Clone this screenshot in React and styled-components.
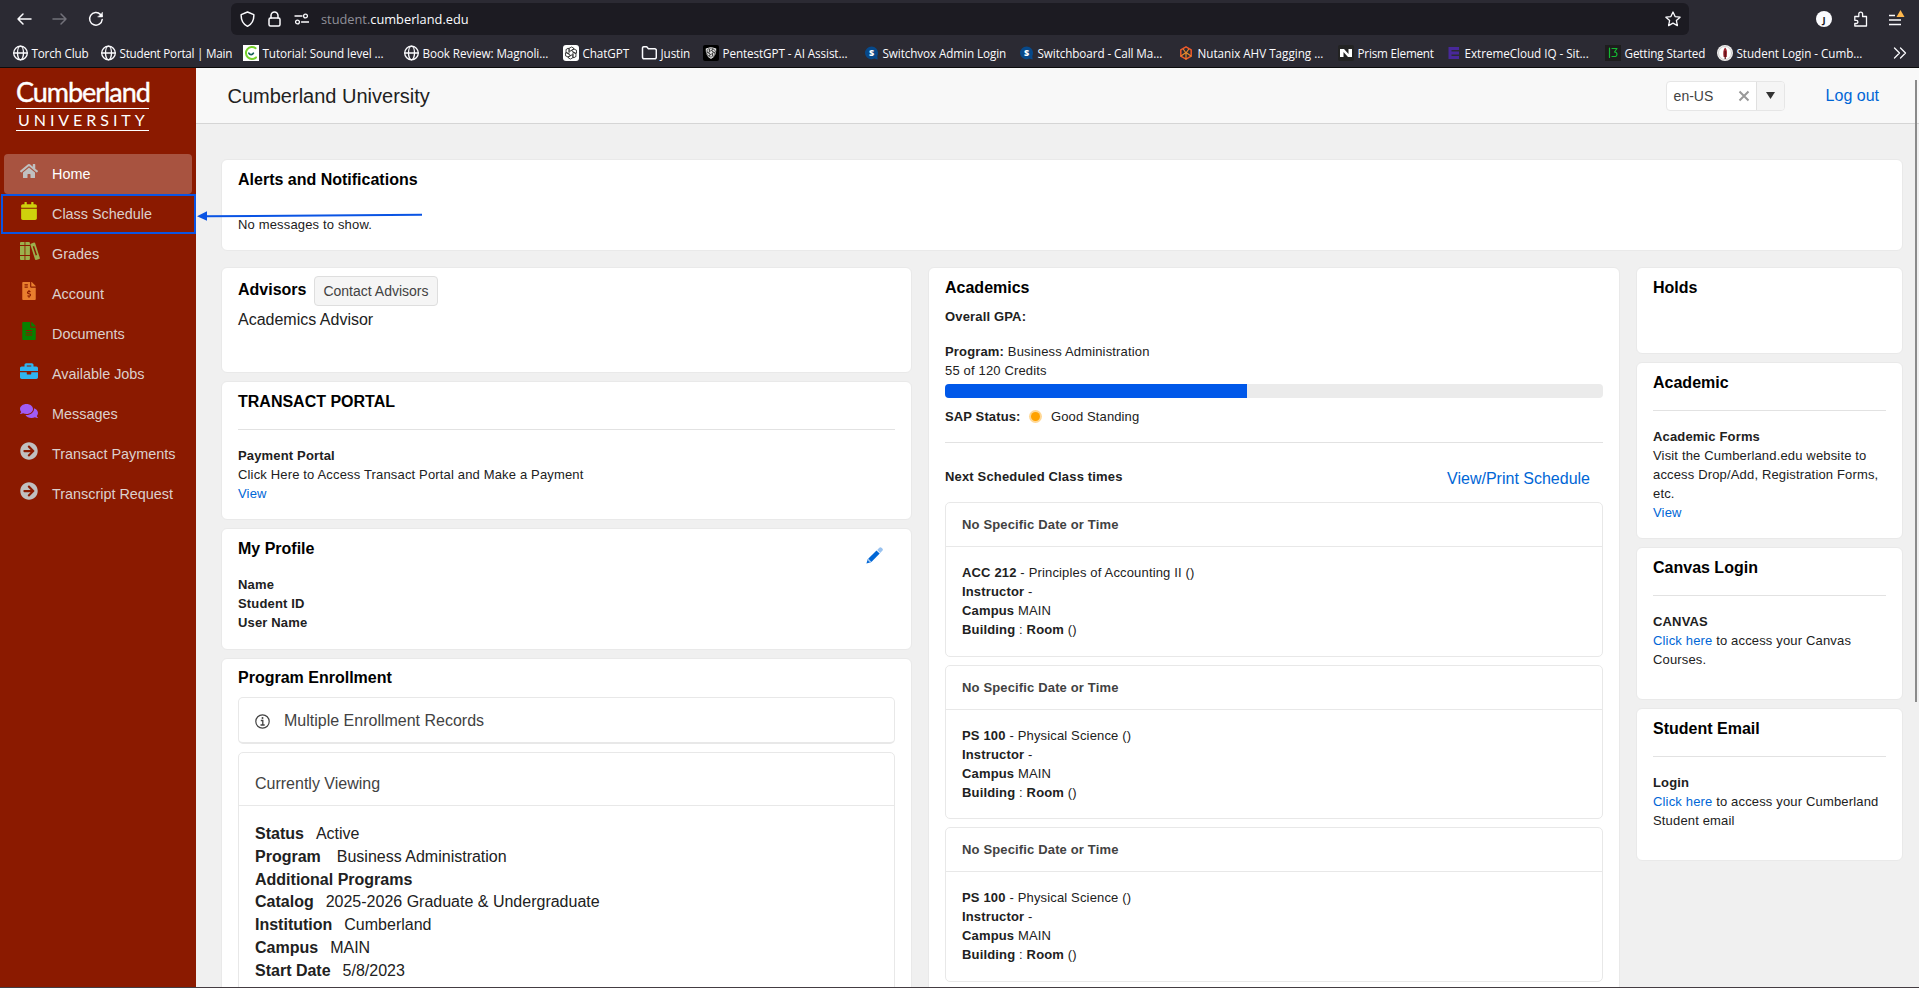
import React from "react";
import styled, { createGlobalStyle, css } from "styled-components";
import {
  FaHome, FaCalendar, FaFileInvoiceDollar, FaFileAlt, FaBriefcase, FaComments, FaArrowCircleRight,
} from "react-icons/fa";

const Global = createGlobalStyle`
  *, *::before, *::after { box-sizing: border-box; }
  html, body { margin: 0; height: 100%; overflow: hidden; }
  body { font: 13px/19px "Liberation Sans", Arial, sans-serif; color: #212121; background: #f0f0f0; }
`;

const Page = styled.div`
  position: relative;
  display: flex;
  flex-direction: column;
  width: 1919px;
  height: 988px;
  overflow: hidden;
  border-bottom: 1px solid #443d42;
`;

/* ---------- browser chrome ---------- */
const Chrome = styled.div`
  flex: none;
  height: 68px;
  background: #2b2a33;
  border-bottom: 1px solid #0c0c0d;
  color: #fbfbfe;
  font-family: "Open Sans", "Noto Sans", sans-serif;
  svg { display: block; flex: none; }
`;
const Toolbar = styled.div`
  display: flex;
  align-items: center;
  height: 38px;
  padding: 0 14px 0 16px;
`;
const NavButtons = styled.div`
  display: flex;
  gap: 20px;
  width: 215px;
`;
const UrlBar = styled.div`
  display: flex;
  align-items: center;
  width: 1458px;
  height: 32px;
  padding: 0 8px;
  border-radius: 6px;
  background: #1c1b22;
`;
const UrlIcons = styled.div`
  display: flex;
  gap: 11px;
  width: 82px;
`;
const UrlText = styled.div`
  flex: 1;
  padding-top: 1px;
  font-size: 12.8px;
  color: #8f8f98;
  b { font-weight: 400; color: #fbfbfe; }
`;
const Tools = styled.div`
  display: flex;
  align-items: center;
  gap: 20px;
  margin-left: auto;
`;
const Bookmarks = styled.div`
  display: flex;
  align-items: center;
  height: 29px;
  padding: 1px 13px 0 12px;
`;
const Bookmark = styled.div`
  display: flex;
  align-items: center;
  flex: none;
  gap: 3.5px;
  width: ${(p) => p.$slot}px;
  font-size: 11.7px;
  line-height: 18px;
  letter-spacing: ${(p) => p.$track ?? -0.09}px;
  white-space: nowrap;
`;

/* ---------- portal frame ---------- */
const Portal = styled.div`
  display: flex;
  flex: 1;
  min-height: 0;
`;
const Sidebar = styled.nav`
  flex: none;
  width: 196px;
  background: #8b1a00;
`;
const Brand = styled.div`
  width: 133px;
  height: 51px;
  margin: 12px 0 23px 16px;
  color: #fff;
  font-family: Lato, sans-serif;
`;
const BrandName = styled.div`
  height: 29px;
  border-bottom: 1px solid #fff;
  font-size: 27px;
  line-height: 23px;
  letter-spacing: -1.05px;
  -webkit-text-stroke: 0.4px #fff;
`;
const BrandSub = styled.div`
  height: 22px;
  padding-left: 2px;
  border-bottom: 1px solid #fff;
  font-size: 16px;
  line-height: 21px;
  letter-spacing: 3.95px;
`;
const NavItem = styled.div`
  position: relative;
  display: flex;
  align-items: center;
  height: 40px;
  margin: 0 4px;
  padding-left: 16px;
  border-radius: 4px;
  font-size: 14.4px;
  color: ${(p) => (p.$active ? "#fff" : "#dcd0cd")};
  background: ${(p) => (p.$active ? "#a85340" : "transparent")};
`;
const NavIcon = styled.span`
  width: 32px;
  height: 25px;
  color: ${(p) => p.$color};
  svg { display: block; width: auto; height: 18px; }
`;
const Highlight = styled.div`
  position: absolute;
  inset: 0 -4px 0 -3px;
  border: 2px solid #0a54e4;
`;
const Pointer = styled.svg`
  position: absolute;
  left: 196px;
  top: 207.5px;
`;

const Main = styled.main`
  flex: 1;
  min-width: 0;
  display: flex;
  flex-direction: column;
`;
const Header = styled.header`
  flex: none;
  display: flex;
  align-items: center;
  height: 56px;
  padding: 0 40px 0 31.5px;
  background: #f8f8f8;
  border-bottom: 1px solid #d5d5d5;
`;
const SiteName = styled.div`
  flex: 1;
  font-size: 20px;
  line-height: 24px;
`;
const Combo = styled.div`
  display: flex;
  align-items: center;
  width: 119px;
  height: 30px;
  margin-right: 41px;
  border: 1px solid #e6e6e6;
  border-radius: 4px;
  background: #fff;
  overflow: hidden;
  font-size: 14px;
  color: #424242;
`;
const ComboValue = styled.span`
  flex: 1;
  padding: 1px 0 0 7px;
`;
const ComboArrow = styled.span`
  display: grid;
  place-items: center;
  width: 28px;
  height: 28px;
  margin-left: 6px;
  border-left: 1px solid #e0e0e0;
  background: #f5f5f5;
`;
const Link = styled.a`
  color: #0066d6;
  font-size: ${(p) => (p.$large ? "16px" : "inherit")};
`;
const Scroller = styled.div`
  position: absolute;
  left: 1915px;
  top: 80px;
  width: 2px;
  height: 622px;
  background: #8a8a8a;
`;

/* ---------- cards ---------- */
const Content = styled.div`
  flex: 1;
  min-height: 0;
  padding: 35px 0 0 25px;
  overflow: hidden;
`;
const Columns = styled.div`
  display: grid;
  grid-template-columns: 691px 692px 267px;
  gap: 16px;
  margin-top: 16px;
`;
const Column = styled.div`
  display: flex;
  flex-direction: column;
  gap: 8px;
`;
const Card = styled.section`
  width: ${(p) => (p.$wide ? "1682px" : "auto")};
  height: ${(p) => (p.$h ? p.$h + "px" : "auto")};
  min-height: ${(p) => (p.$tall ? "740px" : "0")};
  padding: 9px 16px 0;
  border: 1px solid #e9e9e9;
  border-radius: 6px;
  background: #fff;
`;
const Title = styled.h2`
  margin: 0;
  font-size: 16px;
  line-height: ${(p) => (p.$tight ? 20 : 22)}px;
  font-weight: 700;
  color: #000;
`;
const TitleRow = styled.div`
  display: flex;
  align-items: center;
  gap: 8px;
  height: 30px;
  margin-top: -1px;
  ${Title} { margin-top: -3px; }
`;
const Button = styled.button`
  width: 124px;
  height: 30px;
  padding: 0 1px 0 0;
  border: 1px solid #dedede;
  border-radius: 4px;
  background: #f5f5f5;
  font: 14px/20px "Liberation Sans", Arial, sans-serif;
  color: #424242;
`;
const Text = styled.div`
  margin-top: ${(p) => p.$top || 0}px;
  letter-spacing: 0.16px;
  ${(p) => p.$large && css`font-size: 16px; line-height: 23px; letter-spacing: 0;`}
`;
const Rule = styled.hr`
  height: 1px;
  margin: ${(p) => p.$m || "16px 0 16px"};
  border: 0;
  background: #e2e2e2;
`;
const ProfileHead = styled.div`
  display: flex;
  justify-content: space-between;
  height: 36px;
  padding-right: 12px;
  svg { margin-top: 9px; }
`;
const Panel = styled.div`
  border: 1px solid #e8e8e8;
  border-radius: 5px;
  margin-bottom: 8px;
  height: ${(p) => (p.$h ? p.$h + "px" : "auto")};
`;
const InfoPanel = styled(Panel)`
  display: flex;
  align-items: center;
  gap: 14px;
  height: 47px;
  margin-top: 9px;
  padding-left: 16px;
  border-bottom-width: 2px;
  font-size: 16px;
  color: #424242;
  svg { margin-top: 3px; }
`;
const PanelHead = styled.div`
  height: ${(p) => (p.$large ? 53 : 44)}px;
  padding: ${(p) => (p.$large ? "19px 16px 0" : "12px 16px 0")};
  font-size: ${(p) => (p.$large ? 16 : 13)}px;
  line-height: ${(p) => (p.$large ? 23 : 19)}px;
  font-weight: ${(p) => (p.$large ? 400 : 700)};
  letter-spacing: ${(p) => (p.$large ? 0 : 0.15)}px;
  color: #424242;
  border-bottom: 1px solid #e8e8e8;
`;
const PanelBody = styled.div`
  padding: ${(p) => (p.$large ? 16.9 : 16)}px 16px 0;
`;
const Detail = styled.div`
  font-size: 16px;
  line-height: 22.86px;
  span { margin-left: ${(p) => p.$gap || 12}px; }
`;
const Progress = styled.div`
  height: 14px;
  margin-top: 4px;
  border-radius: 4px;
  background: #ebebeb;
  overflow: hidden;
`;
const ProgressFill = styled.div`
  height: 100%;
  background: #0058e9;
`;
const StatusRow = styled.div`
  display: flex;
  align-items: center;
  height: 19px;
  margin-top: 9px;
  letter-spacing: 0.12px;
`;
const Dot = styled.span`
  width: 9px;
  height: 9px;
  margin: 0 11px 0 10.5px;
  border-radius: 50%;
  background: #ffa200;
  box-shadow: 0 0 0 2px #ffd896;
`;
const ScheduleHead = styled.div`
  display: flex;
  align-items: center;
  justify-content: space-between;
  height: 30px;
  margin-bottom: 9px;
  padding-right: 13px;
  b { padding-bottom: 4px; letter-spacing: 0.16px; }
`;

/* ---------- icons ---------- */
const stroke = { fill: "none", stroke: "currentColor", strokeWidth: 1.5, strokeLinecap: "round", strokeLinejoin: "round" };
const Ico = ({ children, ...rest }) => (
  <svg width="16" height="16" viewBox="0 0 16 16" {...stroke} {...rest}>{children}</svg>
);
const Globe = () => (
  <Ico strokeWidth="1.3"><circle cx="8.5" cy="8" r="6.8" /><ellipse cx="8.5" cy="8" rx="3" ry="6.8" /><path d="M1.7 8h13.6" /></Ico>
);
const Tutorial = () => (
  <Ico><rect width="16" height="16" fill="#fff" stroke="none" /><path d="M12.6 3.2A6 6 0 1 0 13 12.4" stroke="#76d12c" strokeWidth="2" /><path d="M5.8 8.2c1 2 3.6 2 4.6 0" stroke="#17635a" strokeWidth="1.7" /></Ico>
);
const ChatKnot = () => (
  <Ico stroke="#333" strokeWidth="0.9">
    <rect width="16" height="16" rx="3" fill="#fff" stroke="none" />
    {[0, 60, 120, 180, 240, 300].map((a) => (
      <path key={a} transform={`rotate(${a} 8 8)`} d="M8 5.9 10.6 4.4V3L8.500 2 6 3.400v4" />
    ))}
  </Ico>
);
const PentestKnot = () => (
  <Ico stroke="#333" strokeWidth="0.7">
    <rect width="16" height="16" rx="2" fill="#000" stroke="none" />
    <path d="M2.800 3.600 8 1.900l5.200 1.700c.3 5-1.200 8.400-5.200 10.400-4-2-5.500-5.400-5.200-10.400z" fill="#e4e4e4" stroke="none" />
    {[0, 60, 120, 180, 240, 300].map((a) => (
      <path key={a} transform={`rotate(${a} 8 7.500)`} d="M8 5.900 10 4.700V3.500L8 2.900 6.300 3.900v3" />
    ))}
  </Ico>
);
const Folder = () => <Ico><path d="M1.500 4V3a1.200 1.200 0 0 1 1.200-1.200h3l1.700 2h6.400A1.500 1.500 0 0 1 15.300 5.300v7a1.500 1.500 0 0 1-1.500 1.500H3a1.500 1.500 0 0 1-1.500-1.500z" /></Ico>;
const SBadge = () => (
  <Ico stroke="none">
    <path d="M8.500 1.500a6.500 6.500 0 0 1 5.800 9.400l.4 3.600-3.400-.9A6.500 6.500 0 0 1 2 8a6.500 6.500 0 0 1 6.500-6.500z" fill="#07498a" />
    <text x="8.500" y="11.200" fontFamily="Open Sans" fontSize="9" fontWeight="800" textAnchor="middle" fill="#fff">S</text>
  </Ico>
);
const Nutanix = () => (
  <Ico stroke="#f0592b" strokeWidth="1.5">
    <path d="M8 1.800 13.200 4.800v6.400L8 14.200 2.800 11.200V4.800z" />
    <path d="M8 8.500v5.500M3 11l5-3.500 5 3.500M5.500 4.500 8 8l2.500-3.500" stroke="#e88b2c" strokeWidth="1.200" />
  </Ico>
);
const Prism = () => <Ico stroke="none"><rect width="16" height="16" rx="2" fill="#232323" /><path d="M2 4h4l4.500 5V4H14v8h-4L5.500 7v5H2z" fill="#fff" /></Ico>;
const Extreme = () => <Ico stroke="none"><path d="M3.500 2H14v3H6.500v1.500H14v3H6.500V11H14v3H3.500z" fill="#48289a" /></Ico>;
const Started = () => <Ico strokeWidth="1.2" stroke="#14b832"><rect width="16" height="16" fill="#1d1d1d" stroke="none" /><path d="M4.500 3v9.500M7 3.500h5L9.500 7c3 0 3.500 4.500 0 4.500H7" /></Ico>;
const Torch = () => <Ico stroke="none"><circle cx="8" cy="8" r="8" fill="#f0eeee" /><circle cx="8" cy="8" r="6.500" fill="#fff" stroke="#bbb" strokeWidth=".6" /><path d="M8 2.500c2.500 2 2 5 1.800 9.500H6.600C6 8 6 5 8 2.500z" fill="#9c2630" /><path d="M7.600 6v8h1.200V6z" fill="#5b1014" /></Ico>;
const Books = () => (
  <svg width="20" height="18" viewBox="0 0 20 18" fill="currentColor">
    <path d="M0 1a1 1 0 0 1 1-1h3.500v3H0zM0 3.900h4.500v9.200H0zM0 14h4.500v4H1a1 1 0 0 1-1-1z" />
    <path d="M5.400 0h3.500a1 1 0 0 1 1 1v2H5.400zM5.400 3.900h4.500v9.200H5.400zM5.400 14h4.500v3a1 1 0 0 1-1 1H5.400z" />
    <path fillRule="evenodd" d="m10.800 1.700 3.200-1.200a.9.900 0 0 1 1.100.6l4.700 14.700a.9.900 0 0 1-.5 1.100l-3.200 1a.9.900 0 0 1-1.100-.6L10.400 2.800a.9.900 0 0 1 .4-1.100zM12.700 4.400l3 9.200 1.400-.5-3-9.100z" />
  </svg>
);
const Pencil = () => (
  <svg width="17" height="17" viewBox="0 0 17 17">
    <path d="M11.200 2.900 13.300.8a1.500 1.500 0 0 1 2.200 0l.8.800a1.500 1.500 0 0 1 0 2.200l-2.100 2.100z" fill="#99c2ef" />
    <path d="m10.500 3.400 3.200 3.200-8.300 8.300-3.200-3.200z" fill="#0066d6" />
    <path d="m1.800 12 3.200 3.200L.4 16.600z" fill="#0066d6" />
    <path d="m2.200 11.700 3.200 3.200-1.500.6-2.300-2.300z" fill="#99c2ef" />
  </svg>
);
const InfoIcon = () => (
  <svg width="15" height="15" viewBox="0 0 15 15" fill="none" stroke="#424242">
    <circle cx="7.500" cy="7.500" r="6.700" strokeWidth="1.200" /><path d="M5.800 6.500h2v4.300M5.500 11h4.200" strokeWidth="1.300" /><circle cx="7.500" cy="4" r="1" fill="#424242" stroke="none" />
  </svg>
);

const bookmarks = [
  ["Torch Club", 88, Globe, -0.18], ["Student Portal | Main", 143, Globe, -0.25], ["Tutorial: Sound level ...", 160, Tutorial],
  ["Book Review: Magnoli...", 160, Globe], ["ChatGPT", 78, ChatKnot], ["Justin", 62, Folder],
  ["PentestGPT - AI Assist...", 160, PentestKnot], ["Switchvox Admin Login", 155, SBadge],
  ["Switchboard - Call Ma...", 160, SBadge], ["Nutanix AHV Tagging ...", 160, Nutanix, -0.02], ["Prism Element", 107, Prism, -0.2],
  ["ExtremeCloud IQ - Sit...", 160, Extreme, -0.04], ["Getting Started", 112, Started, -0.12], ["Student Login - Cumb...", 175, Torch, -0.05],
];

const menu = [
  ["Home", "#c0c0c0", FaHome], ["Class Schedule", "#cfd10c", FaCalendar], ["Grades", "#9cb04c", Books],
  ["Account", "#e97e2e", FaFileInvoiceDollar], ["Documents", "#078000", FaFileAlt], ["Available Jobs", "#2fb4f0", FaBriefcase],
  ["Messages", "#a05cf5", FaComments], ["Transact Payments", "#c0c0c0", FaArrowCircleRight], ["Transcript Request", "#c0c0c0", FaArrowCircleRight],
];

const details = [
  ["Status", "Active"], ["Program", "Business Administration", 16], ["Additional Programs", ""],
  ["Catalog", "2025-2026 Graduate & Undergraduate"], ["Institution", "Cumberland"], ["Campus", "MAIN"], ["Start Date", "5/8/2023"],
];

const classes = [
  ["ACC 212", "Principles of Accounting II"], ["PS 100", "Physical Science"], ["PS 100", "Physical Science"],
];

const BrowserChrome = () => (
  <Chrome>
    <Toolbar>
      <NavButtons>
        <Ico><path d="M15 8H2M7 3 2 8l5 5" /></Ico>
        <Ico color="#72717a"><path d="M1 8h13M9 3l5 5-5 5" /></Ico>
        <Ico><path d="M14.200 8.500A6.300 6.300 0 1 1 12.500 3.500L14 5" /><path d="M14.500 1.500V6H10z" fill="currentColor" strokeWidth=".5" /></Ico>
      </NavButtons>
      <UrlBar>
        <UrlIcons>
          <Ico><path d="M8.500 1 14.800 3.600c.3 5-1 9-6.300 11.700C3.200 12.600 1.900 8.600 2.200 3.600z" /></Ico>
          <Ico><rect x="3" y="7" width="11" height="8" rx="1.500" /><path d="M5 7V4.500a3.500 3.500 0 0 1 7 0V7" /></Ico>
          <Ico strokeWidth="1.3"><path d="M2 5h7M8.500 11H16" /><circle cx="12.500" cy="5" r="1.900" /><circle cx="4.500" cy="11" r="1.900" /></Ico>
        </UrlIcons>
        <UrlText>student.<b>cumberland.edu</b></UrlText>
        <Ico strokeWidth="1.3"><path d="m8 1 2.100 4.600 5 .6-3.700 3.400 1 5L8 12.100l-4.400 2.500 1-5L.9 6.200l5-.6z" /></Ico>
      </UrlBar>
      <Tools>
        <Ico stroke="none"><circle cx="8" cy="8" r="8" fill="#fbfbfe" /><text x="8" y="11.500" fontFamily="Open Sans" fontSize="9.500" fontWeight="700" textAnchor="middle" fill="#1c1b22">J</text></Ico>
        <Ico strokeWidth="1.3"><path d="M2.800 7V5.500h4V3a1.900 1.900 0 0 1 3.800 0v2.500h3.900V15H2.800v-2.500h1.500a1.400 1.400 0 0 0 0-3.200H2.800z" /></Ico>
        <svg width="17" height="20" viewBox="0 0 17 20"><path d="M1 6.500h6M1 11h12M1 15.500h12" stroke="#fbfbfe" strokeWidth="1.300" /><path d="m12.500 1 4 7h-8z" fill="#ffb84d" /></svg>
      </Tools>
    </Toolbar>
    <Bookmarks>
      {bookmarks.map(([label, slot, Icon, track]) => (
        <Bookmark key={label} $slot={slot} $track={track}><Icon /><span>{label}</span></Bookmark>
      ))}
      <Ico strokeWidth="1.3"><path d="m2.500 3 5 5-5 5M8.500 3l5 5-5 5" /></Ico>
    </Bookmarks>
  </Chrome>
);

const PortalSidebar = () => (
  <Sidebar>
    <Brand><BrandName>Cumberland</BrandName><BrandSub>UNIVERSITY</BrandSub></Brand>
    {menu.map(([label, color, Icon], i) => (
      <NavItem key={label} $active={i === 0}>
        <NavIcon $color={color}><Icon /></NavIcon>
        {label}
        {i === 1 && <Highlight />}
      </NavItem>
    ))}
  </Sidebar>
);

const LeftColumn = () => (
  <Column>
    <Card $h={106}>
      <TitleRow><Title>Advisors</Title><Button>Contact Advisors</Button></TitleRow>
      <Text $large $top={2}>Academics Advisor</Text>
    </Card>
    <Card $h={139}>
      <Title>TRANSACT PORTAL</Title>
      <Rule />
      <Text><b>Payment Portal</b></Text>
      <Text>Click Here to Access Transact Portal and Make a Payment</Text>
      <Text><Link>View</Link></Text>
    </Card>
    <Card $h={122}>
      <ProfileHead><Title>My Profile</Title><Pencil /></ProfileHead>
      <Text $top={1}><b>Name</b></Text>
      <Text><b>Student ID</b></Text>
      <Text><b>User Name</b></Text>
    </Card>
    <Card $h={400}>
      <Title $tight>Program Enrollment</Title>
      <InfoPanel><InfoIcon />Multiple Enrollment Records</InfoPanel>
      <Panel $h={300}>
        <PanelHead $large>Currently Viewing</PanelHead>
        <PanelBody $large>
          {details.map(([k, v, gap]) => <Detail key={k} $gap={gap}><b>{k}</b><span>{v}</span></Detail>)}
        </PanelBody>
      </Panel>
    </Card>
  </Column>
);

const MiddleColumn = () => (
  <Card $tall>
    <Title>Academics</Title>
    <Text $top={8}><b>Overall GPA:</b></Text>
    <Text $top={16}><b>Program:</b> Business Administration</Text>
    <Text>55 of 120 Credits</Text>
    <Progress><ProgressFill style={{ width: `${(55 / 120) * 100}%` }} /></Progress>
    <StatusRow><b>SAP Status:</b><Dot />Good Standing</StatusRow>
    <Rule $m="16px 0 20px" />
    <ScheduleHead><b>Next Scheduled Class times</b><Link $large>View/Print Schedule</Link></ScheduleHead>
    {classes.map(([code, name], i) => (
      <Panel key={i} $h={154.5}>
        <PanelHead>No Specific Date or Time</PanelHead>
        <PanelBody>
          <Text><b>{code}</b> - {name} ()</Text>
          <Text><b>Instructor</b> -</Text>
          <Text><b>Campus</b> MAIN</Text>
          <Text><b>Building</b> : <b>Room</b> ()</Text>
        </PanelBody>
      </Panel>
    ))}
  </Card>
);

const RightColumn = () => (
  <Column>
    <Card $h={87}><Title>Holds</Title></Card>
    <Card $h={177}>
      <Title>Academic</Title>
      <Rule />
      <Text><b>Academic Forms</b></Text>
      <Text>Visit the Cumberland.edu website to access Drop/Add, Registration Forms, etc.</Text>
      <Text><Link>View</Link></Text>
    </Card>
    <Card $h={153}>
      <Title>Canvas Login</Title>
      <Rule />
      <Text><b>CANVAS</b></Text>
      <Text><Link>Click here</Link> to access your Canvas Courses.</Text>
    </Card>
    <Card $h={153}>
      <Title>Student Email</Title>
      <Rule />
      <Text><b>Login</b></Text>
      <Text><Link>Click here</Link> to access your Cumberland Student email</Text>
    </Card>
  </Column>
);

export default function App() {
  return (
    <Page>
      <Global />
      <BrowserChrome />
      <Portal>
        <PortalSidebar />
        <Main>
          <Header>
            <SiteName>Cumberland University</SiteName>
            <Combo>
              <ComboValue>en-US</ComboValue>
              <svg width="12" height="12" viewBox="0 0 12 12" stroke="#999" strokeWidth="2"><path d="m1.500 1.500 9 9M10.500 1.500l-9 9" /></svg>
              <ComboArrow><svg width="9" height="7" viewBox="0 0 9 7"><path d="M0 0h9L4.500 7z" fill="#333" /></svg></ComboArrow>
            </Combo>
            <Link $large>Log out</Link>
          </Header>
          <Content>
            <Card $wide $h={92}>
              <Title>Alerts and Notifications</Title>
              <Text $top={24}>No messages to show.</Text>
            </Card>
            <Columns>
              <LeftColumn />
              <MiddleColumn />
              <RightColumn />
            </Columns>
          </Content>
        </Main>
      </Portal>
      <Scroller />
      <Pointer width="230" height="14" viewBox="0 0 230 14">
        <path d="M10 8.300 226 6.700" stroke="#0a54e4" strokeWidth="2" />
        <path d="M1 8.200 11 3.200v9.500z" fill="#0a54e4" />
      </Pointer>
    </Page>
  );
}
